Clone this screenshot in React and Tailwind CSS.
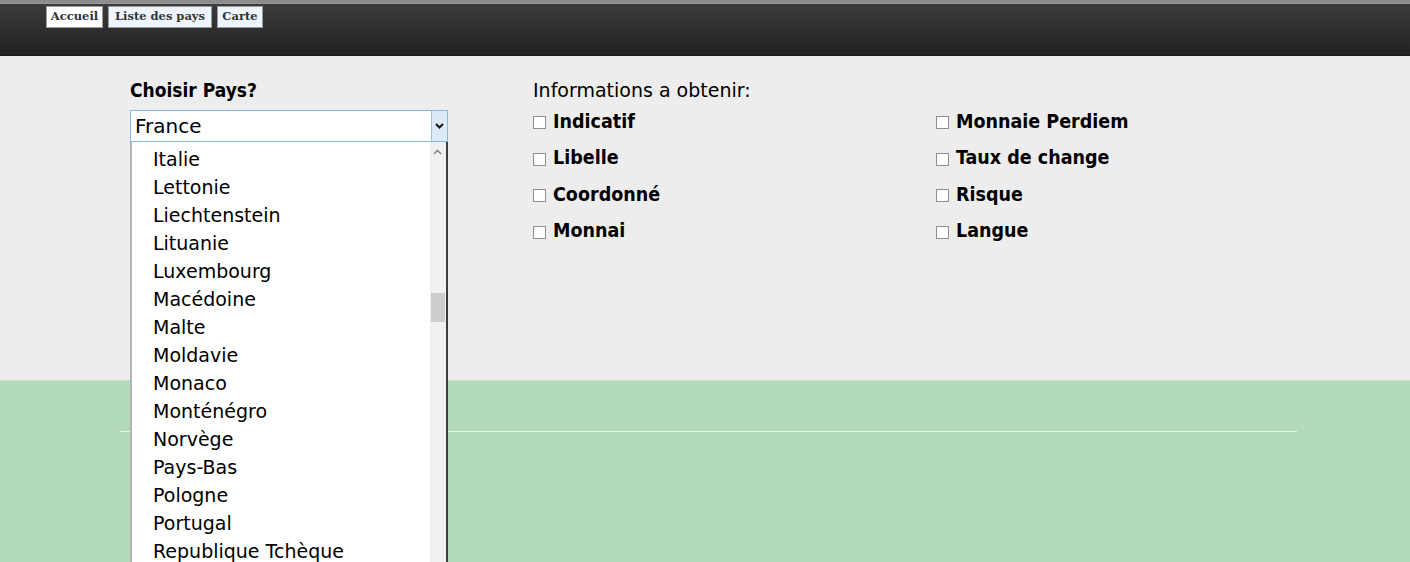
import { useState } from 'react'

const countries = [
  'Italie', 'Lettonie', 'Liechtenstein', 'Lituanie', 'Luxembourg', 'Macédoine', 'Malte',
  'Moldavie', 'Monaco', 'Monténégro', 'Norvège', 'Pays-Bas', 'Pologne', 'Portugal', 'Republique Tchèque',
]

const infosLeft = ['Indicatif', 'Libelle', 'Coordonné', 'Monnai']
const infosRight = ['Monnaie Perdiem', 'Taux de change', 'Risque', 'Langue']

const sans = { fontFamily: '"DejaVu Sans", sans-serif' }
const cond = { fontFamily: '"DejaVu Sans Condensed", "DejaVu Sans", sans-serif' }

function Check({ label }) {
  return (
    <label className="flex items-center gap-[7px] h-[36.5px] text-[19.5px] font-bold text-black" style={cond}>
      <span className="w-[13px] h-[13px] mt-[3px] border border-[#8f8f8f] bg-white inline-block" />
      {label}
    </label>
  )
}

export default function App() {
  const [pays] = useState('France')

  return (
    <div className="w-[1410px] h-[562px] overflow-hidden bg-[#ededed] relative" style={sans}>
      <header className="h-[56px] border-t-[3px] border-[#8c8c8c] bg-gradient-to-b from-[#3b3b3b] to-[#232323] border-b border-b-[#1b1b1b]">
        <div className="h-px bg-[#9a9a9a]" />
        <nav className="flex gap-[5px] pl-[46px] pt-[2px]" style={{ fontFamily: '"DejaVu Serif", serif' }}>
          <button className="w-[57px] h-[22px] bg-white border border-[#9a9a9a] text-[11.5px] text-[#333] font-bold">Accueil</button>
          <button className="w-[104px] h-[22px] bg-[#eef4fb] border border-[#9a9a9a] text-[11.5px] text-[#333] font-bold">Liste des pays</button>
          <button className="w-[46px] h-[22px] bg-[#eef4fb] border border-[#9a9a9a] text-[11.5px] text-[#333] font-bold">Carte</button>
        </nav>
      </header>

      <main className="h-[324px] flex pt-[21px]">
        <section className="w-[318px] ml-[130px] relative">
          <h2 className="text-[19px] font-bold text-black leading-[26px]" style={cond}>Choisir Pays?</h2>
          <div className="mt-[7px] h-[32px] border border-[#86b9eb] bg-white flex items-center relative">
            <span className="pl-[4px] text-[20px] text-black">{pays}</span>
            <span className="absolute right-0 top-0 bottom-0 w-[16px] bg-[#dce9f8] border-l border-[#9cc2ec] flex items-center justify-center">
              <svg width="9" height="6" viewBox="0 0 9 6"><path d="M1 1l3.5 3.5L8 1" fill="none" stroke="#111" strokeWidth="2" /></svg>
            </span>
          </div>
          <div className="absolute left-0 top-[65px] w-[318px] h-[460px] bg-white border-l-2 border-l-[#b5b5b5] border-r-2 border-r-[#3c3c3c] flex z-10">
            <ul className="flex-1 pl-[21px] pt-[3px]">
              {countries.map(c => (
                <li key={c} className="h-[28px] leading-[28px] text-[19px] text-black">{c}</li>
              ))}
            </ul>
            <div className="w-[16px] bg-[#f0f0f0] relative">
              <svg className="absolute top-[7px] left-[3px]" width="9" height="6" viewBox="0 0 9 6"><path d="M1 5l3.5-3.5L8 5" fill="none" stroke="#888" strokeWidth="1.6" /></svg>
              <div className="absolute top-[151px] left-px w-[14px] h-[29px] bg-[#cdcdcd]" />
            </div>
          </div>
        </section>

        <section className="ml-[85px]">
          <h2 className="text-[19px] text-black leading-[26px]">Informations a obtenir:</h2>
          <div className="flex">
            <div className="w-[403px]">
              {infosLeft.map(l => <Check key={l} label={l} />)}
            </div>
            <div>
              {infosRight.map(l => <Check key={l} label={l} />)}
            </div>
          </div>
        </section>
      </main>

      <footer className="h-[182px] bg-[#b3dbbb] pt-[50px] px-[120px] border-t border-[#c9e3cf]">
        <hr className="w-[1177px] border-0 h-px bg-[#e6f2e8]" />
      </footer>
    </div>
  )
}
